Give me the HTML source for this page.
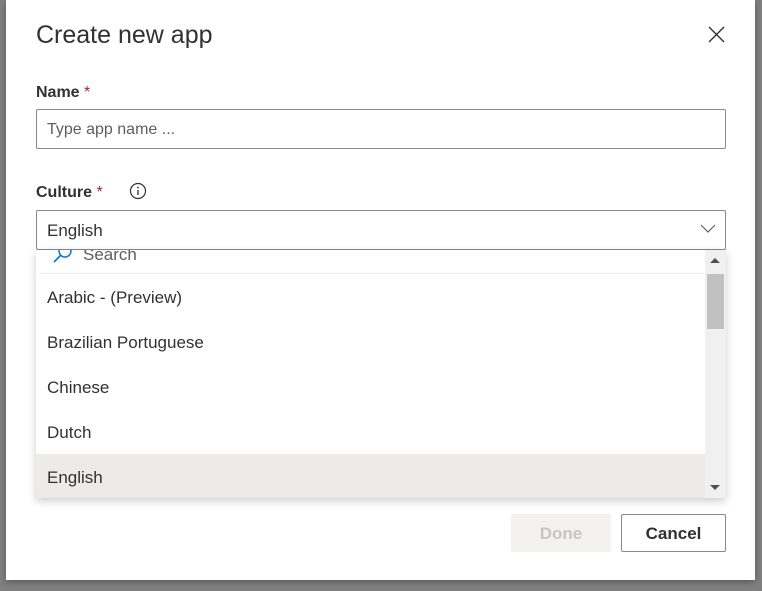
<!DOCTYPE html>
<html><head><style>
body{margin:0;width:762px;height:591px;background:#7f7f7f;font-family:"Liberation Sans",sans-serif;position:relative;overflow:hidden}
.dlg{position:absolute;left:6px;top:0;width:749px;height:580px;background:#fff;box-shadow:0 2px 6px rgba(0,0,0,.3)}
.a{position:absolute}
.t{color:#323130}
</style></head><body>
<div class="dlg"></div>
<div class="a t" style="left:36px;top:21px;font-size:25px;">Create new app</div>
<svg class="a" style="left:708px;top:26px" width="17" height="17"><path d="M1 1L16 16M16 1L1 16" stroke="#323130" stroke-width="1.4"/></svg>
<div class="a t" style="left:36px;top:84px;font-size:16px;font-weight:bold">Name <span style="color:#a4262c;font-weight:normal">*</span></div>
<div class="a" style="left:36px;top:109px;width:688px;height:38px;border:1px solid #8a8886;border-radius:2px"></div>
<div class="a" style="left:47px;top:121px;font-size:16px;color:#605e5c">Type app name ...</div>
<div class="a t" style="left:36px;top:184px;font-size:16px;font-weight:bold">Culture <span style="color:#a4262c;font-weight:normal">*</span></div>
<svg class="a" style="left:129px;top:182px" width="18" height="18"><circle cx="9" cy="9" r="7.5" fill="none" stroke="#323130" stroke-width="1.2"/><circle cx="9" cy="5.5" r=".9" fill="#323130"/><path d="M9 8v5" stroke="#323130" stroke-width="1.3"/></svg>
<div class="a" style="left:36px;top:210px;width:688px;height:38px;border:1px solid #8a8886;border-radius:2px"></div>
<div class="a t" style="left:47px;top:221px;font-size:17px">English</div>
<svg class="a" style="left:700px;top:224px" width="16" height="10"><path d="M1 1L8 8L15 1" fill="none" stroke="#605e5c" stroke-width="1.2"/></svg>
<div class="a" style="left:36px;top:250px;width:690px;height:248px;background:#fff;box-shadow:0 3px 8px rgba(0,0,0,.2);overflow:hidden">
 <svg class="a" style="left:16px;top:-4px" width="22" height="18"><circle cx="13" cy="5" r="6" fill="none" stroke="#0078d4" stroke-width="1.5"/><path d="M8.5 9.5L2 16" stroke="#0078d4" stroke-width="1.6"/></svg>
 <div class="a" style="left:47px;top:-5px;font-size:17px;color:#605e5c">Search</div>
 <div class="a" style="left:3px;top:23px;width:664px;height:1px;background:#edebe9"></div>
 <div class="a t" style="left:11px;top:38px;font-size:17px">Arabic - (Preview)</div>
 <div class="a t" style="left:11px;top:83px;font-size:17px">Brazilian Portuguese</div>
 <div class="a t" style="left:11px;top:128px;font-size:17px">Chinese</div>
 <div class="a t" style="left:11px;top:173px;font-size:17px">Dutch</div>
 <div class="a" style="left:0;top:204px;width:669px;height:44px;background:#edebe9"></div>
 <div class="a t" style="left:11px;top:218px;font-size:17px">English</div>
 <div class="a" style="left:669px;top:0;width:21px;height:248px;background:#f0f0f0"></div>
 <div class="a" style="left:671px;top:24px;width:17px;height:55px;background:#c1c1c1"></div>
 <svg class="a" style="left:674px;top:8px" width="10" height="6"><path d="M0 5L5 0L10 5Z" fill="#505050"/></svg>
 <svg class="a" style="left:674px;top:235px" width="10" height="6"><path d="M0 0L5 5L10 0Z" fill="#505050"/></svg>
</div>
<div class="a" style="left:511px;top:514px;width:100px;height:38px;background:#f3f2f1;border-radius:2px;color:#c8c6c4;font-size:17px;font-weight:bold;text-align:center;line-height:39px">Done</div>
<div class="a t" style="left:621px;top:514px;width:103px;height:36px;border:1px solid #8a8886;border-radius:2px;font-size:17px;font-weight:bold;text-align:center;line-height:37px">Cancel</div>
</body></html>
